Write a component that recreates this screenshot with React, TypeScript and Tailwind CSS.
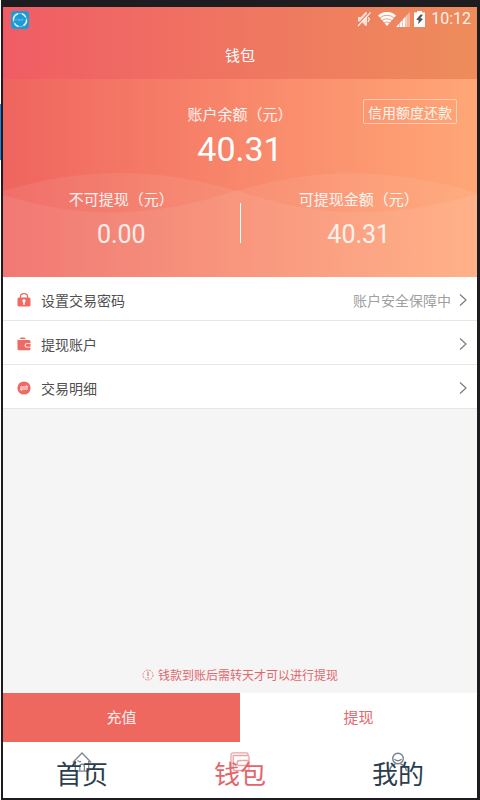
import type { ReactNode } from 'react';

const LockIcon = () => (
  <svg viewBox="0 0 14 14" className="h-3.5 w-3.5 shrink-0" aria-hidden="true">
    <path d="M3.400 5V3.800a3.600 3.200 0 0 1 7.200 0V5" fill="none" stroke="#ed6b64" strokeWidth="1.200" />
    <rect x="0.5" y="4.400" width="13" height="9.200" rx="1.600" fill="#ed6b64" />
    <path d="M7 6.200a1.600 1.600 0 0 1 .8 3v2.500H6.200V9.200a1.600 1.600 0 0 1 .8-3z" fill="#fff" />
  </svg>
);

const PurseIcon = () => (
  <svg viewBox="0 0 14 14" className="h-3.5 w-3.5 shrink-0" aria-hidden="true">
    <path d="M2.500 2.100L4 .6h3.500l1.200 1.500z" fill="#ed6b64" />
    <path
      d="M.5 2.300l1.300.7h10.200a1.500 1.500 0 0 1 1.500 1.500v1.700H9.800a2.200 2.200 0 0 0 0 4.400h3.700v1.200a1.500 1.500 0 0 1-1.500 1.500H2a1.500 1.500 0 0 1-1.500-1.500z"
      fill="#ed6b64"
    />
    <path d="M10 7h3.500v2.800H10A1.400 1.400 0 0 1 10 7z" fill="#ed6b64" />
  </svg>
);

const TransferIcon = () => (
  <svg viewBox="0 0 14 14" className="h-3.5 w-3.5 shrink-0" aria-hidden="true">
    <circle cx="7" cy="7" r="6.600" fill="#ed6b64" />
    <path d="M3.300 6h7.400L8.800 4.300M10.700 8H3.300l1.900 1.700" fill="none" stroke="#fff" strokeWidth="1" />
  </svg>
);

const Chevron = () => (
  <svg viewBox="0 0 8 12" className="h-3 w-2 shrink-0" aria-hidden="true">
    <path d="M1 .5L7 6l-6 5.500" fill="none" stroke="#7d7d7d" strokeWidth="1.200" />
  </svg>
);

const HomeIcon = () => (
  <svg viewBox="0 0 20 20" className="h-5 w-5" fill="none" stroke="#7b8790" strokeWidth="1.300" aria-hidden="true">
    <path d="M.8 10.500L10 1l9.200 9.500M3.300 9v10.200h13.400V9" />
    <path d="M7.800 19v-4.500a2.300 2.300 0 0 1 4.600 0V19M5.500 8.500l2 1.200h1.500" />
  </svg>
);

const WalletIcon = () => (
  <svg viewBox="0 0 20 20" className="h-5 w-5" fill="none" stroke="#eea3a3" strokeWidth="1.300" aria-hidden="true">
    <path d="M1 16.500V2.800a2 2 0 0 1 2-2h13.500A1.500 1.500 0 0 1 18 2.300V3.500H3.200v13.500a1.500 1.500 0 0 0 1.500 1.500H17.500a1.500 1.500 0 0 0 1.500-1.500V5a1.500 1.500 0 0 0-1-1.500" />
    <path d="M19 8.500H9.500a2.500 2.500 0 0 0 0 5H19" />
  </svg>
);

const UserIcon = () => (
  <svg viewBox="0 0 20 20" className="h-5 w-5" fill="none" stroke="#73808a" strokeWidth="1.400" aria-hidden="true">
    <circle cx="10" cy="6.500" r="5.300" />
    <path d="M6.500 7.200c1.500 2 5.500 2 7 0M7.500 12C4 13 2 15.500 1.500 19M12.500 12c3.500 1 5.500 3.500 6 7" />
  </svg>
);

function StatusBar() {
  return (
    <div className="flex h-6 items-center justify-between pr-1.5 pl-2">
      <svg viewBox="0 0 18 18" className="mt-0.5 h-[18px] w-[18px]" aria-hidden="true">
        <rect width="18" height="18" rx="3" fill="#1d9ad6" />
        <circle cx="9" cy="9" r="6.600" fill="none" stroke="#6cc6ec" strokeWidth="1" />
        <path
          d="M2.500 9.500A6.500 6.500 0 0 1 7 2.800M15.500 8.500a6.500 6.500 0 0 1-3 6M11 2.800a6.500 6.500 0 0 1 3.800 3.400M7.500 15.400a6.500 6.500 0 0 1-4-3"
          fill="none"
          stroke="#e4f5fc"
          strokeWidth="1.500"
        />
        <path d="M5 9.800V8.200h1.500M7.500 8.200h1.400v1.500H7.500zM10.300 9.800V8.200h2.200M10.300 9h1.700" fill="none" stroke="#6cc6ec" strokeWidth=".7" />
      </svg>
      <div className="flex items-center text-white">
        <svg viewBox="0 0 14 16" className="mr-[7px] h-4 w-3.5" aria-hidden="true">
          <path d="M1 6h3l4.500-5 1.500.5v13l-1.500.5L4.500 10.500H1z" fill="#fff" fillOpacity=".75" />
          <path d="M12.500 1L.5 14" stroke="#ee7c60" strokeWidth="1.500" />
          <path d="M13.500 1.500L1 15M11 6.500l1.500 1.500-1.500 3" fill="none" stroke="#fff" strokeOpacity=".85" strokeWidth="1.300" />
        </svg>
        <svg viewBox="0 0 18 16" className="h-4 w-[18px]" aria-hidden="true">
          <path d="M9 15L0 4.500a13.500 13.500 0 0 1 18 0z" fill="#fff" />
          <path d="M1.500 7.200a11 11 0 0 1 15 0M3.800 9.800a7.800 7.800 0 0 1 10.400 0M6 12a4.800 4.800 0 0 1 6 0" fill="none" stroke="#ee805e" strokeWidth=".8" />
        </svg>
        <svg viewBox="0 0 14 16" className="mr-1 h-4 w-3.5" aria-hidden="true">
          <path d="M0 16h10.500V4.500z" fill="#fff" />
          <path d="M10.500 16H14V.8l-3.500 3.700z" fill="#fff" fillOpacity=".4" />
          <path d="M3.500 10v6M6.500 7v9M9.500 4v12" stroke="#ee825e" strokeWidth=".5" />
        </svg>
        <svg viewBox="0 0 11 16" className="mr-1.5 h-4 w-[11px]" aria-hidden="true">
          <path d="M3 0h5v1.500h3V16H0V1.500h3z" fill="#fff" />
          <path d="M6.500 3.500L2.300 8.500l2.500 1L4 13.200l5-5.300-2.500-1L9 3.800z" fill="#555" />
        </svg>
        <span className="font-[Roboto,sans-serif] text-base leading-6 opacity-90">10:12</span>
      </div>
    </div>
  );
}

function Amount({ label, value }: { label: string; value: string }) {
  return (
    <div className="flex flex-1 flex-col items-center">
      <span className="text-[15px] leading-6 text-white/90">{label}</span>
      <span className="mt-2 font-[Roboto,sans-serif] text-[25px] leading-8 text-white/85">{value}</span>
    </div>
  );
}

function MenuRow({ icon, label, note }: { icon: ReactNode; label: string; note?: string }) {
  return (
    <li className="border-b border-[#e6e6e6] bg-white">
      <a href="#" className="flex h-[43px] items-center pt-0.5 pr-2.5 pl-3.5">
        {icon}
        <span className="ml-2.5 flex-1 text-sm text-[#505050]">{label}</span>
        {note && <span className="mr-2 text-sm text-[#a0a0a0]">{note}</span>}
        <Chevron />
      </a>
    </li>
  );
}

function Tab({ icon, label, active }: { icon: ReactNode; label: string; active?: boolean }) {
  return (
    <a
      href="#"
      aria-current={active ? 'page' : undefined}
      className={`relative flex flex-1 items-center justify-center pt-1.5 text-[26px] leading-8 ${active ? 'text-[#e3656b]' : 'text-[#2b3e4e]'}`}
    >
      <span className="absolute top-2.5 left-1/2 -translate-x-1/2">{icon}</span>
      <span className="relative">{label}</span>
    </a>
  );
}

export default function App() {
  return (
    <div className="flex min-h-screen bg-[#1c1c21] font-['Noto_Sans_CJK_SC',sans-serif]">
      <div className="flex w-px flex-col bg-white">
        <div className="h-[104px]" />
        <div className="h-14 bg-[#1d86e8]" />
      </div>
      <div className="mt-[7px] mr-[3px] mb-0.5 ml-0.5 flex flex-1 flex-col bg-[#f5f5f5]">
        <header className="bg-linear-to-r from-[#f05c65] to-[#ee8c5b]">
          <StatusBar />
          <h1 className="h-12 text-center text-[15px] leading-12 text-white">钱包</h1>
        </header>

        <section className="relative bg-linear-to-r from-[#ef645f] via-[#f8876b] to-[#ffa676] pb-[26px]">
          <svg
            viewBox="0 0 474 198"
            preserveAspectRatio="none"
            className="absolute inset-0 h-full w-full"
            fill="#fff"
            fillOpacity=".07"
            aria-hidden="true"
          >
            <path d="M0 112C78 88 156 88 234 112C312 88 390 88 474 114V198H0z" />
            <path d="M0 116C78 140 150 140 234 111C312 140 390 140 474 115V198H0z" />
          </svg>
          <div className="relative grid grid-cols-[1fr_auto_1fr] items-start px-5 pt-5">
            <span />
            <div className="flex flex-col items-center">
              <span className="text-[15px] leading-[30px] text-white/90">账户余额（元）</span>
              <span className="font-[Roboto,sans-serif] text-[34px] leading-10 text-white">40.31</span>
            </div>
            <button
              type="button"
              className="h-[25px] justify-self-end rounded-xs border border-white/50 px-1 text-sm leading-5 text-white/90"
            >
              信用额度还款
            </button>
          </div>
          <div className="relative mt-[18px] flex items-start">
            <Amount label="不可提现（元）" value="0.00" />
            <div className="mt-4 h-10 w-px bg-white" />
            <Amount label="可提现金额（元）" value="40.31" />
          </div>
        </section>

        <ul>
          <MenuRow icon={<LockIcon />} label="设置交易密码" note="账户安全保障中" />
          <MenuRow icon={<PurseIcon />} label="提现账户" />
          <MenuRow icon={<TransferIcon />} label="交易明细" />
        </ul>

        <p className="mt-auto flex items-center justify-center gap-1 pb-2 text-xs leading-5 text-[#e2686c]">
          <svg viewBox="0 0 12 12" className="h-3 w-3" fill="none" stroke="#e2787b" aria-hidden="true">
            <circle cx="6" cy="6" r="5" strokeWidth=".9" strokeDasharray="2 1" />
            <path d="M6 2.500v4.500M6 8v1.500" strokeWidth="1.200" />
          </svg>
          钱款到账后需转天才可以进行提现
        </p>
        <div className="flex h-[49px] text-[15px]">
          <button type="button" className="flex-1 bg-[#ee6860] text-white/90">
            充值
          </button>
          <button type="button" className="flex-1 bg-white text-[#e3686d]">
            提现
          </button>
        </div>
        <nav className="flex h-14 bg-white">
          <Tab icon={<HomeIcon />} label="首页" />
          <Tab icon={<WalletIcon />} label="钱包" active />
          <Tab icon={<UserIcon />} label="我的" />
        </nav>
      </div>
    </div>
  );
}
